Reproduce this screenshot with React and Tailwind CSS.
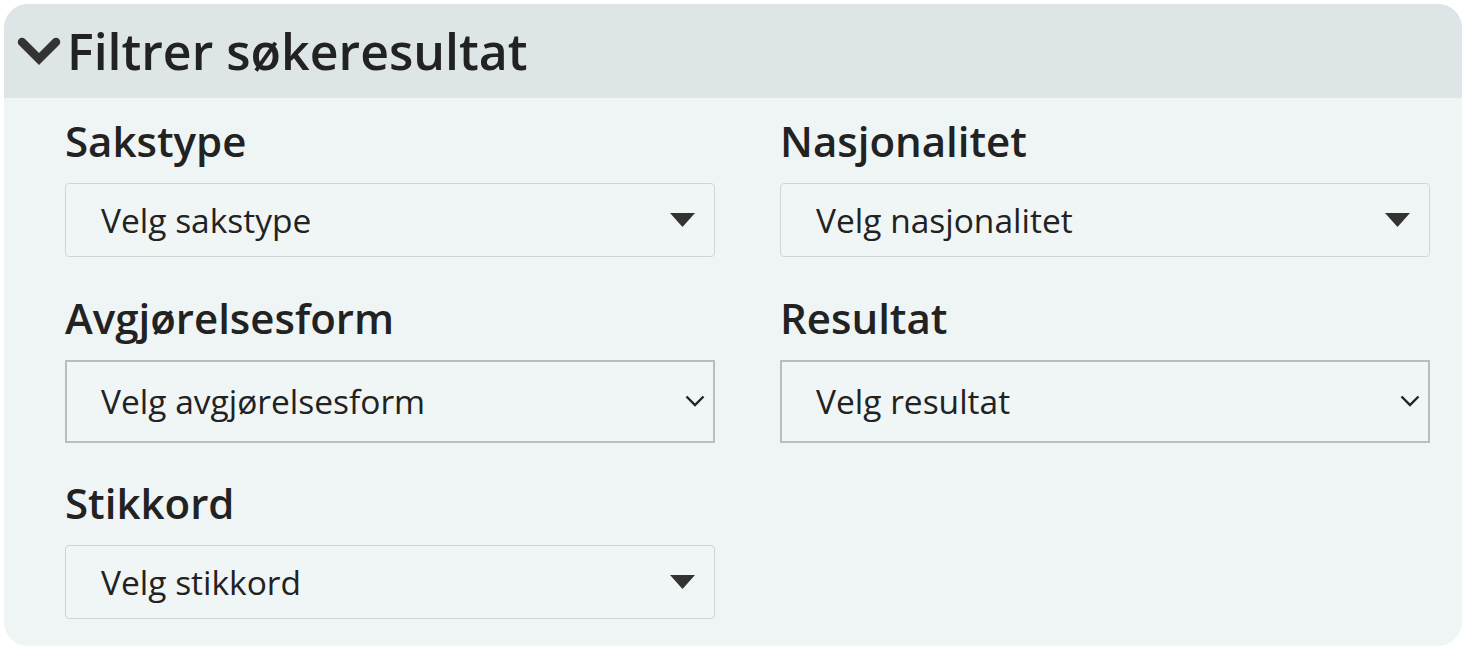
import React from "react";

// Filter panel: collapsible header + grid of dropdown filters.
const font = { fontFamily: '"Open Sans", "Noto Sans", sans-serif' };

function Label({ children }) {
  return (
    <div className="text-[42px] leading-[53px] font-semibold text-[#222] mb-[16px]">
      {children}
    </div>
  );
}

// Custom dropdown (select2-like) with solid triangle
function Dropdown({ placeholder }) {
  return (
    <div className="h-[74px] rounded-[4px] border border-[#cfd5d7] bg-[#f0f5f5] flex items-center justify-between pl-[35px] pr-[19px]">
      <span className="text-[33.5px] text-[#222]">{placeholder}</span>
      <svg width="25" height="14" viewBox="0 0 25 14">
        <path d="M0 0 H25 L12.5 14 Z" fill="#333" />
      </svg>
    </div>
  );
}

// Native select look with thin chevron
function NativeSelect({ placeholder }) {
  return (
    <div className="h-[83px] border-2 border-[#b9bdbf] bg-[#f0f5f5] flex items-center justify-between pl-[34px] pr-[8px]">
      <span className="text-[33.5px] text-[#222]">{placeholder}</span>
      <svg width="20" height="12" viewBox="0 0 20 12">
        <path d="M1.5 1.5 L10 10 L18.5 1.5" fill="none" stroke="#222" strokeWidth="2.4" />
      </svg>
    </div>
  );
}

export default function App() {
  return (
    <div className="w-[1467px] h-[651px] bg-white p-[4px]" style={font}>
      <div className="w-[1458px] h-[642px] rounded-[24px] overflow-hidden bg-[#eff4f4]">
        <div className="h-[94px] bg-[#dee5e7] flex items-center pl-[13px] gap-[6px]">
          <svg width="44" height="32" viewBox="0 0 44 32" className="mt-[1px]">
            <path
              d="M5 6 L22 23 L39 6"
              fill="none"
              stroke="#333"
              strokeWidth="8.5"
              strokeLinecap="round"
              strokeLinejoin="miter"
            />
          </svg>
          <span className="text-[50px] font-semibold text-[#222] leading-none">
            Filtrer søkeresultat
          </span>
        </div>
        <div className="grid grid-cols-[650px_650px] gap-x-[65px] gap-y-[33.5px] pl-[61px] pt-[16px]">
          <div>
            <Label>Sakstype</Label>
            <Dropdown placeholder="Velg sakstype" />
          </div>
          <div>
            <Label>Nasjonalitet</Label>
            <Dropdown placeholder="Velg nasjonalitet" />
          </div>
          <div>
            <Label>Avgjørelsesform</Label>
            <NativeSelect placeholder="Velg avgjørelsesform" />
          </div>
          <div>
            <Label>Resultat</Label>
            <NativeSelect placeholder="Velg resultat" />
          </div>
          <div>
            <Label>Stikkord</Label>
            <Dropdown placeholder="Velg stikkord" />
          </div>
        </div>
      </div>
    </div>
  );
}
